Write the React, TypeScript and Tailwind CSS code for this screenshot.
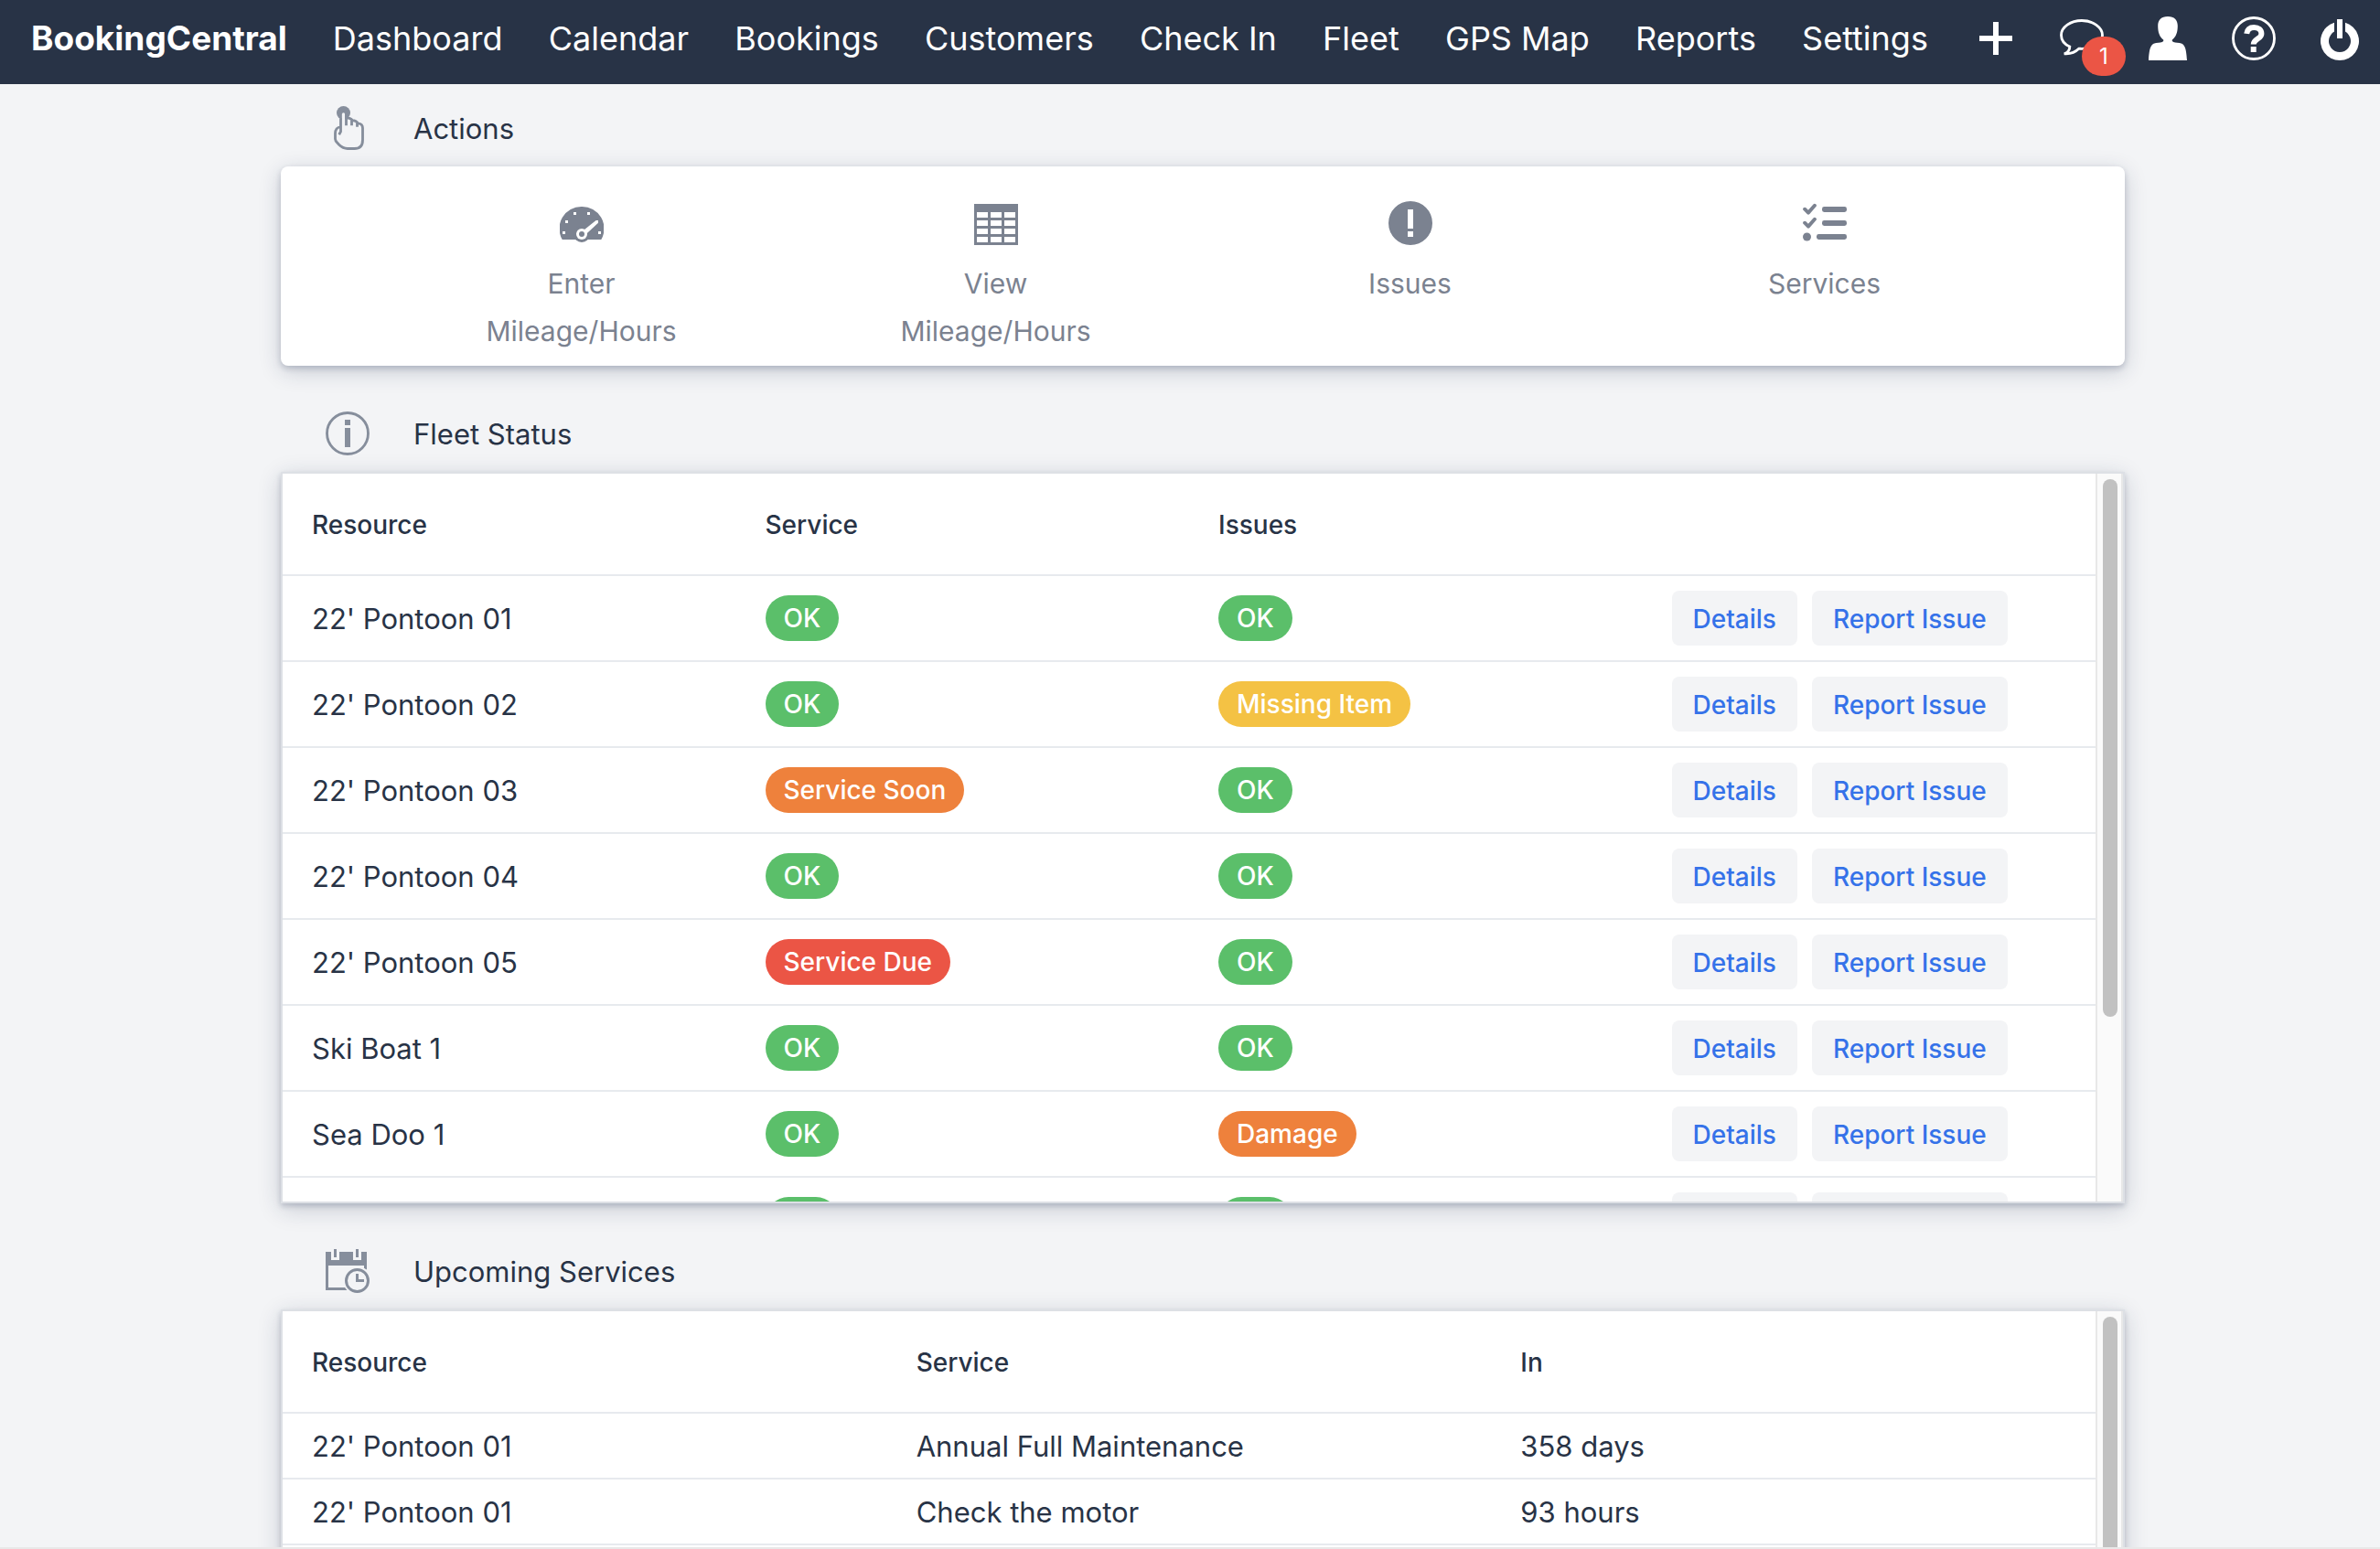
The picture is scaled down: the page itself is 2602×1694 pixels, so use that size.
import type { ReactNode } from "react";

/* ---------- Types ---------- */

type Tone = "success" | "info" | "warning" | "error";

interface Status {
  label: string;
  tone: Tone;
}

interface FleetRow {
  resource: string;
  service: Status;
  issue: Status;
}

interface ServiceRow {
  resource: string;
  service: string;
  due: string;
}

/* ---------- Data ---------- */

const OK: Status = { label: "OK", tone: "success" };

const NAV_LINKS = [
  "Dashboard",
  "Calendar",
  "Bookings",
  "Customers",
  "Check In",
  "Fleet",
  "GPS Map",
  "Reports",
  "Settings",
];

const FLEET: FleetRow[] = [
  { resource: "22' Pontoon 01", service: OK, issue: OK },
  { resource: "22' Pontoon 02", service: OK, issue: { label: "Missing Item", tone: "info" } },
  { resource: "22' Pontoon 03", service: { label: "Service Soon", tone: "warning" }, issue: OK },
  { resource: "22' Pontoon 04", service: OK, issue: OK },
  { resource: "22' Pontoon 05", service: { label: "Service Due", tone: "error" }, issue: OK },
  { resource: "Ski Boat 1", service: OK, issue: OK },
  { resource: "Sea Doo 1", service: OK, issue: { label: "Damage", tone: "warning" } },
  { resource: "Sea Doo 2", service: OK, issue: OK },
];

const SERVICES: ServiceRow[] = [
  { resource: "22' Pontoon 01", service: "Annual Full Maintenance", due: "358 days" },
  { resource: "22' Pontoon 01", service: "Check the motor", due: "93 hours" },
  { resource: "22' Pontoon 02", service: "Annual Full Maintenance", due: "358 days" },
];

const TONES: Record<Tone, string> = {
  success: "bg-[#5bbf6a]",
  info: "bg-[#f4c244]",
  warning: "bg-[#ee813c]",
  error: "bg-[#eb5545]",
};

/* ---------- Icons (16 unit grid) ---------- */

function Icon({ children }: { children: ReactNode }) {
  return (
    <svg className="h-12 w-12 shrink-0" viewBox="0 0 16 16" fill="currentColor" aria-hidden="true">
      {children}
    </svg>
  );
}

function PlusIcon() {
  return (
    <Icon>
      <path d="M7 2h2v5h5v2H9v5H7V9H2V7h5z" />
    </Icon>
  );
}

function CommentIcon() {
  return (
    <Icon>
      <path
        d="M8 1.5C3.9 1.5.5 3.9.5 6.8c0 1.8 1.2 3.3 3.1 4.2 0 1-.3 2-2 2.6 2.3.2 4.1-.6 5.4-1.9.3 0 .7.1 1 .1 4.1 0 7.5-2.2 7.5-5S12.1 1.5 8 1.5z"
        fill="none"
        stroke="currentColor"
        strokeWidth="0.95"
      />
    </Icon>
  );
}

function UserIcon() {
  return (
    <Icon>
      <path d="M8 0C5.6 0 4.4 1.3 4.4 3.4 4.4 5.8 5 7.4 6.4 8.5V9C5.9 9.6 4.8 9.5 3.7 9.7 2 10 1.3 11 1 16h14c-.3-5-1-6-2.7-6.3-1.1-.2-2.2-.1-2.7-.7v-.5c1.4-1.1 2-2.7 2-5.1C11.6 1.3 10.4 0 8 0z" />
    </Icon>
  );
}

function HelpIcon() {
  return (
    <Icon>
      <circle cx="8" cy="8" r="7.5" fill="none" stroke="currentColor" strokeWidth="0.95" />
      <path
        d="M5.4 6.3C5.6 4.8 6.6 4 8.1 4c1.6 0 2.7.9 2.7 2.3 0 1.9-2.9 1.9-2.9 3.9"
        fill="none"
        stroke="currentColor"
        strokeWidth="2"
      />
      <path d="M6.9 11h2v2h-2z" />
    </Icon>
  );
}

function PowerIcon() {
  return (
    <Icon>
      <path d="M7 1h2v7H7z" />
      <path d="M10 2.29v3.25A4 4 0 1 1 6 5.54V2.29A7 7 0 1 0 10 2.29z" />
    </Icon>
  );
}

function TouchIcon() {
  return (
    <Icon>
      <circle cx="6.5" cy="2.5" r="2.5" />
      <path d="M6.5 3v5" stroke="#f3f4f6" strokeWidth="1.1" strokeLinecap="round" />
      <path
        d="M5.5 4.5v4.8l-.6 1.1M5.5 7.6c-1.3 0-2 1-2 2.4v2c0 .9.7 1.3 1.3 2 1 1 2 1.5 3.2 1.5h2.5c2 0 3-1.2 3-3.2V8c0-1-.7-1.6-1.7-1.7-.5-.8-1.2-1.1-2-1.1-.5-.6-1.3-.9-2.3-.9M7.5 3v4.1M9.5 5v2.1M11.5 6v1.6"
        fill="none"
        stroke="currentColor"
        strokeWidth="0.95"
      />
    </Icon>
  );
}

function InfoIcon() {
  return (
    <Icon>
      <circle cx="8" cy="8" r="7.5" fill="none" stroke="currentColor" strokeWidth="0.95" />
      <path d="M7 3h2v2H7zM7 6h2v7H7z" />
    </Icon>
  );
}

function CalendarClockIcon() {
  return (
    <Icon>
      <path d="M3 0h1v3H3zM11 0h1v3h-1z" />
      <path d="M0 1h2v3h3V1h5v3h3V1h2v6.5L14 7V6H1v8h7v1H0z" />
      <circle cx="11.5" cy="11.5" r="5.1" fill="#f3f4f6" />
      <circle cx="11.5" cy="11.5" r="4" fill="none" stroke="currentColor" />
      <path d="M11 9h1v2h2v1h-3z" />
    </Icon>
  );
}

function GaugeIcon() {
  return (
    <Icon>
      <path d="M8 2a8 8 0 0 0-7.1 12h14.2A8 8 0 0 0 8 2z" />
      <circle cx="8" cy="12" r="3" />
      <g fill="#fff">
        <path d="M5 4h1v1H5zM10 4h1v1h-1zM2 7h1v1H2zM1 11h1v1H1zM14 11h1v1h-1z" />
        <path d="M8.4 10.8 13.2 7H14v.9l-4.5 4.2z" />
        <circle cx="8" cy="12" r="2" />
      </g>
      <circle cx="8" cy="12" r="1" />
    </Icon>
  );
}

function TableIcon() {
  return (
    <Icon>
      <path
        fillRule="evenodd"
        d="M0 1h16v15H0zM1 4v2h4V4zM6 4v2h4V4zM11 4v2h4V4zM1 7v2h4V7zM6 7v2h4V7zM11 7v2h4V7zM1 10v2h4v-2zM6 10v2h4v-2zM11 10v2h4v-2zM1 13v2h4v-2zM6 13v2h4v-2zM11 13v2h4v-2z"
      />
    </Icon>
  );
}

function ExclamationIcon() {
  return (
    <Icon>
      <path fillRule="evenodd" d="M8 0a8 8 0 1 0 0 16A8 8 0 0 0 8 0zM7 3h2v7H7zM7 11h2v2H7z" />
    </Icon>
  );
}

function TasksIcon() {
  return (
    <Icon>
      <rect x="7" y="2" width="9" height="2" rx="0.8" />
      <rect x="7" y="7" width="9" height="2" rx="0.8" />
      <rect x="5" y="12" width="11" height="2" rx="0.8" />
      <circle cx="1.5" cy="13" r="1.5" />
      <path
        d="M.7 2.9 2 4.2l2.3-2.6M.7 7.9 2 9.2l2.3-2.6"
        fill="none"
        stroke="currentColor"
        strokeWidth="1.3"
        strokeLinecap="round"
        strokeLinejoin="round"
      />
    </Icon>
  );
}

/* ---------- Pieces ---------- */

function NavBar() {
  return (
    <header className="flex h-[92px] shrink-0 items-center bg-[#283346] pr-5 pb-2 pl-[34px] text-white">
      <a href="#home" className="text-[37px] font-bold">
        BookingCentral
      </a>
      <nav className="mx-[50px] flex flex-1 justify-between text-[36px]">
        {NAV_LINKS.map((label) => (
          <a key={label} href="#nav" className="whitespace-nowrap">
            {label}
          </a>
        ))}
      </nav>
      <div className="flex items-center gap-[46px]">
        <button type="button" aria-label="Add">
          <PlusIcon />
        </button>
        <button type="button" aria-label="Messages" className="relative">
          <CommentIcon />
          <span className="absolute top-[22px] left-6 flex h-[43px] w-12 items-center justify-center rounded-full bg-[#eb5545] text-2xl">
            1
          </span>
        </button>
        <button type="button" aria-label="Account">
          <UserIcon />
        </button>
        <button type="button" aria-label="Help">
          <HelpIcon />
        </button>
        <button type="button" aria-label="Log out">
          <PowerIcon />
        </button>
      </div>
    </header>
  );
}

function Section({ icon, title, children }: { icon: ReactNode; title: string; children: ReactNode }) {
  return (
    <section>
      <div className="mb-[18px] flex h-12 items-center gap-12 pl-[49px] text-[#868e9c]">
        {icon}
        <h2 className="pt-0.5 text-[31px] text-[#283346]">{title}</h2>
      </div>
      {children}
    </section>
  );
}

function Action({ icon, label }: { icon: ReactNode; label: string }) {
  return (
    <button type="button" className="flex flex-col items-center gap-4 text-[#7b8290]">
      {icon}
      <span className="w-[240px] text-[30px] leading-[52px]">{label}</span>
    </button>
  );
}

function Grid({ columns, children }: { columns: string[]; children: ReactNode }) {
  return (
    <div className="flex h-[800px] border-2 border-[#dde0e5] bg-white shadow-[0_3px_6px_rgba(25,39,75,0.2),0_6px_24px_rgba(25,39,75,0.2)]">
      <div className="flex-1 overflow-y-auto [scrollbar-width:none]">
        <table className="w-full table-fixed border-separate border-spacing-0 text-left text-[31px] [&_td]:border-b-2 [&_td]:border-[#e7eaee] [&_th]:border-b-2 [&_th]:border-[#e7eaee]">
          <thead>
            <tr className="h-[112px] text-[28px]">
              {columns.map((column) => (
                <th key={column} className="px-8 pt-0.5 font-medium">
                  {column}
                </th>
              ))}
            </tr>
          </thead>
          <tbody>{children}</tbody>
        </table>
      </div>
      <div className="w-[30px] border-x-2 border-[#e8e8e8] bg-[#fafafa] py-1.5 pr-1 pl-1.5">
        <div className="h-3/4 rounded-full bg-[#c1c1c1]" />
      </div>
    </div>
  );
}

function Badge({ status }: { status: Status }) {
  return (
    <span
      className={`inline-flex h-[50px] items-center rounded-full px-5 text-[28px] font-medium text-white ${TONES[status.tone]}`}
    >
      {status.label}
    </span>
  );
}

function RowButton({ children }: { children: ReactNode }) {
  return (
    <button
      type="button"
      className="h-[60px] rounded-lg bg-[#f3f4f6] px-[23px] pt-0.5 text-[28px] font-medium whitespace-nowrap text-[#3572e9]"
    >
      {children}
    </button>
  );
}

/* ========== Page ========== */

export default function App() {
  return (
    <div className="flex h-screen flex-col border-b-2 border-[#e8e8e8] bg-[#f3f4f6] font-[Inter,sans-serif] text-[#283346]">
      <NavBar />

      <main className="flex-1 overflow-y-auto pt-6 pb-12 pl-7 [scrollbar-width:none]">
        <div className="mx-auto flex max-w-[2016px] flex-col gap-[50px]">
          {/* Actions */}
          <Section icon={<TouchIcon />} title="Actions">
            <div className="grid grid-cols-4 items-start rounded-lg bg-white px-[102px] pt-[38px] pb-3 shadow-[0_3px_6px_rgba(25,39,75,0.2),0_6px_24px_rgba(25,39,75,0.2)]">
              <Action icon={<GaugeIcon />} label="Enter Mileage/Hours" />
              <Action icon={<TableIcon />} label="View Mileage/Hours" />
              <Action icon={<ExclamationIcon />} label="Issues" />
              <Action icon={<TasksIcon />} label="Services" />
            </div>
          </Section>

          {/* Fleet status */}
          <Section icon={<InfoIcon />} title="Fleet Status">
            <Grid columns={["Resource", "Service", "Issues", ""]}>
              {FLEET.map((row) => (
                <tr key={row.resource} className="h-[94px]">
                  <td className="px-8 pt-0.5">{row.resource}</td>
                  <td className="px-8 leading-none">
                    <Badge status={row.service} />
                  </td>
                  <td className="px-8 leading-none">
                    <Badge status={row.issue} />
                  </td>
                  <td className="pl-8">
                    <div className="flex gap-4">
                      <RowButton>Details</RowButton>
                      <RowButton>Report Issue</RowButton>
                    </div>
                  </td>
                </tr>
              ))}
            </Grid>
          </Section>

          {/* Upcoming services */}
          <Section icon={<CalendarClockIcon />} title="Upcoming Services">
            <Grid columns={["Resource", "Service", "In"]}>
              {SERVICES.map((row, i) => (
                <tr key={i} className="h-[72px]">
                  <td className="px-8 pt-0.5">{row.resource}</td>
                  <td className="px-8 pt-0.5">{row.service}</td>
                  <td className="px-8 pt-0.5">{row.due}</td>
                </tr>
              ))}
            </Grid>
          </Section>
        </div>
      </main>
    </div>
  );
}
